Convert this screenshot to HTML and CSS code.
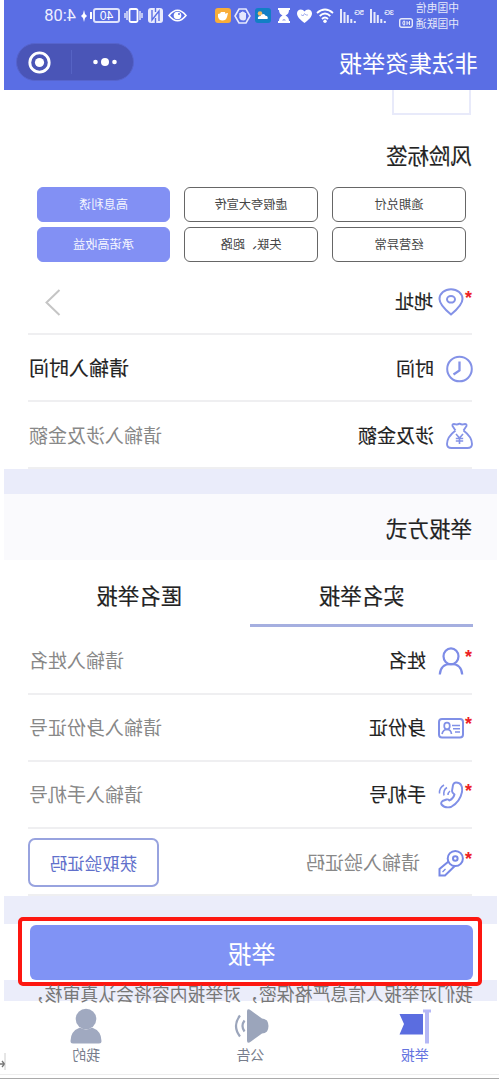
FILE: index.html
```html
<!DOCTYPE html>
<html lang="zh-CN">
<head>
<meta charset="utf-8">
<title>非法集资举报</title>
<link rel="stylesheet" href="styles.css">
</head>
<body>
<div class="mirror">
<div class="phone">
  <header class="header">
    <div class="status">
      <div class="carriers">
        <span>中国电信</span>
        <span class="carrier-line">中国联通<svg width="14" height="10" viewBox="0 0 14 10"><rect x=".7" y=".7" width="12.6" height="8.6" rx="2" fill="none" stroke="#fff" stroke-width="1.4"/><path d="M3.5 3v4M6 3v4M3.5 5H6M8.3 3v4h1.2q1.5-2 0-4z" fill="none" stroke="#fff"/></svg></span>
      </div>
      <div class="signal"><small>3G</small><svg width="17" height="15" viewBox="0 0 17 15"><path d="M1.2 13v2M4.7 11v4M8.2 7v8M11.5 4v11M15 1v14" stroke="#fff" stroke-width="2" opacity=".85"/></svg></div>
      <div class="signal second"><small>5G</small><svg width="17" height="15" viewBox="0 0 17 15"><path d="M1.2 13v2M4.7 11v4M8.2 7v8M11.5 4v11M15 1v14" stroke="#fff" stroke-width="2" opacity=".85"/></svg></div>
      <svg class="s-wifi" width="18" height="15" viewBox="0 0 18 15"><g fill="none" stroke="#fff" stroke-width="1.8"><path d="M1 5Q9-2 17 5M3.7 8Q9 3 14.3 8M6 11Q9 8 12 11"/></g><circle cx="9" cy="13.2" r="1.7" fill="#fff"/></svg>
      <svg class="s-heart" width="15" height="14" viewBox="0 0 15 14"><path d="M7.500 14C3 10.500 0 8 0 4.300 0 0 5.500-1 7.500 2.500 9.500-1 15 0 15 4.300 15 8 12 10.500 7.500 14z" fill="#fff"/><path d="M4 6h2l1.500-1.500 1.500 2.500 1-1h1" fill="none" stroke="#a5afee"/></svg>
      <svg class="s-glass" width="12" height="15" viewBox="0 0 12 15"><path d="M0 0h12v2h-1q0 4-3.500 5.500Q11 9 11 13h1v2H0v-2h1q0-4 3.500-5.500Q1 6 1 2H0z" fill="#fff"/><path d="M4 12.500Q6 9.500 8 12.500z" fill="#8f9bec"/></svg>
      <svg class="s-weather" width="16" height="15" viewBox="0 0 16 15"><rect width="16" height="15" rx="3" fill="#127fc5"/><circle cx="11" cy="5.500" r="2.300" fill="#f4ba60"/><path d="M3.500 11q-1-3 2-3.200 1-2.800 4-1.300 1 1 .8 1.500 3.500 0 2.700 3z" fill="#fff"/></svg>
      <svg class="s-hex" width="17" height="16" viewBox="0 0 17 16"><path d="M5 1h7l4 7-4 7H5L1 8z" fill="none" stroke="#e5e8fd" stroke-width="1.600"/><path d="M5 8V5h1.300V4h1.300V3.500H9V4h1.300v1h1.400v5q-1 2.500-4 2.500T5 9z" fill="#e5e8fd"/></svg>
      <svg class="s-orange" width="16" height="15" viewBox="0 0 16 15"><rect width="16" height="15" rx="3" fill="#f8ad39"/><path d="M3 5q2 0 2.500 1l.5-2h4l1 1.500 2 .5v3q-1 3.500-4.500 3.500T4 9z" fill="#fff"/></svg>
      <svg class="s-eye" width="19" height="13" viewBox="0 0 19 13"><path d="M1 6.500Q9.500-4 18 6.500 9.500 17 1 6.500z" fill="none" stroke="#fff" stroke-width="1.600"/><circle cx="9.500" cy="6.500" r="3.800" fill="#fff"/><circle cx="8" cy="5" r="1" fill="#5a6ee4"/></svg>
      <svg class="s-nfc" width="15" height="15" viewBox="0 0 15 15"><rect width="15" height="15" rx="3" fill="#e9ebfd"/><path d="M4 13V3l7 9V2M7.500 0v4M7.500 10v5" fill="none" stroke="#5a6ee4" stroke-width="1.400"/></svg>
      <svg class="s-vib" width="19" height="15" viewBox="0 0 19 15"><rect x="5.500" y="1" width="8" height="13" rx="1.500" fill="none" stroke="#fff" stroke-width="1.800"/><path d="M3 3v9M1 5v5M16 3v9M18 5v5" stroke="#fff" stroke-width="1.200"/></svg>
      <div class="battery">40</div>
      <svg class="s-charge" width="6" height="12" viewBox="0 0 6 12"><path d="M3 0l1 4 2 2-2 2-1 4-1-4-2-2 2-2z" fill="#fff"/></svg>
      <time>4:08</time>
    </div>
    <div class="titlebar">
      <h1>非法集资举报</h1>
      <div class="capsule">
        <svg width="24" height="8" viewBox="0 0 24 8"><g fill="#fff"><circle cx="2.500" cy="4" r="2.300"/><circle cx="12" cy="4" r="4"/><circle cx="21.500" cy="4" r="2.300"/></g></svg>
        <i></i>
        <svg width="23" height="23" viewBox="0 0 23 23"><circle cx="11.500" cy="11.500" r="9.700" fill="none" stroke="#fff" stroke-width="2.800"/><circle cx="11.500" cy="11.500" r="4.600" fill="#fff"/></svg>
      </div>
    </div>
  </header>

  <section class="risk">
    <div class="upload"></div>
    <h2>风险标签</h2>
    <div class="tags">
      <span class="tag">逾期兑付</span><span class="tag">虚假夸大宣传</span><span class="tag on">高息利诱</span>
      <span class="tag">经营异常</span><span class="tag">失联、跑路</span><span class="tag on">承诺高收益</span>
    </div>
  </section>

  <section class="rows">
    <div class="row req">
      <b class="star">*</b>
      <svg class="icon" width="26" height="28" viewBox="0 0 26 28"><g fill="none" stroke="#8492e7" stroke-width="2"><path d="M13 26.500Q1.500 17 1.500 11a11.500 9.800 0 0 1 23 0Q24.500 17 13 26.500z"/><ellipse cx="13" cy="11.300" rx="4" ry="3.300"/></g></svg>
      <label class="near">地址</label>
      <svg class="chevron" width="16" height="27" viewBox="0 0 16 27"><path d="M1.500 1l13 12.500-13 12.500" fill="none" stroke="#c5c5c5" stroke-width="2"/></svg>
    </div>
    <div class="row">
      <svg class="icon" width="27" height="28" viewBox="0 0 27 28"><g fill="none" stroke="#8492e7" stroke-width="2"><circle cx="13.500" cy="14" r="12.300"/><path d="M13.500 6.500v9l6 4" stroke-width="2.300"/></g></svg>
      <label>时间</label><span class="value dark">请输入时间</span>
    </div>
    <div class="row">
      <svg class="icon" width="27" height="28" viewBox="0 0 27 28"><g fill="none" stroke="#8492e7" stroke-width="1.900"><path d="M9.500 8.500L6.500 4Q6 1.500 9 2.200q2 .8 4.500-.5 2.500 1.300 4.500.5 3-.7 2.500 1.800l-3 4.500M9.500 8.500Q1 15 1 22q0 4 4.500 4h16q4.500 0 4.500-4 0-7-8.500-13.500"/><path d="M10 12l3.500 4 3.500-4M13.500 16v6M9.800 16.500h7.400M9.800 19h7.400" stroke-width="1.600"/></g></svg>
      <label>涉及金额</label><span class="value">请输入涉及金额</span>
    </div>
  </section>

  <div class="band"></div>
  <div class="method"><h2>举报方式</h2></div>
  <nav class="tabs"><span class="active">实名举报</span><span>匿名举报</span></nav>

  <section class="rows identity">
    <div class="row req">
      <b class="star">*</b>
      <svg class="icon" width="26" height="28" viewBox="0 0 26 28"><g fill="none" stroke="#7d8ce7" stroke-width="2.200"><ellipse cx="13" cy="9.300" rx="7.500" ry="8"/><path d="M1.800 27.500Q2.500 17 13 17t11.200 10.500"/></g></svg>
      <label>姓名</label><span class="value">请输入姓名</span>
    </div>
    <div class="row req">
      <b class="star">*</b>
      <svg class="icon" width="26" height="28" viewBox="0 0 26 28"><g fill="none" stroke="#8090e7" stroke-width="2"><rect x="1" y="5" width="24" height="18.500" rx="3"/><path d="M4 11.500h8M4 14.800h7M4 18h5" stroke-width="1.500"/><ellipse cx="17" cy="12" rx="2.800" ry="3.300" stroke-width="1.700"/><path d="M12.500 20q.5-4.500 4.500-4.500t5 4.500" stroke-width="1.700"/></g></svg>
      <label>身份证</label><span class="value">请输入身份证号</span>
    </div>
    <div class="row req">
      <b class="star">*</b>
      <svg class="icon" width="26" height="28" viewBox="0 0 26 28"><g fill="none" stroke="#8090e7" stroke-width="1.900" stroke-linejoin="round"><path d="M8 1.500Q1 1.500 2 11q2 10 11 15 6 1.500 9.500-2.500 1-2-1-3.500l-4-1.500q-1.500-.5-3 1-4-2-5-6 2.500-2 2.500-3.500L11 4Q10 1.500 8 1.500z"/><path d="M14 10q2 1.500 2 4M17 6.500q4 2.500 3 8M20 4q5 3 4.500 8.500" stroke-width="1.500"/></g></svg>
      <label>手机号</label><span class="value">请输入手机号</span>
    </div>
    <div class="row req code">
      <b class="star">*</b>
      <svg class="icon" width="26" height="28" viewBox="0 0 26 28"><g fill="none" stroke="#7788e6" stroke-width="2"><circle cx="8.700" cy="9.500" r="7.600"/><circle cx="8.700" cy="9.500" r="2.300"/><path d="M9.500 17.300L19 26.500h5.500V20l-9.300-7.800"/><path d="M18.500 20l3 3" stroke-width="1.300"/></g></svg>
      <span class="prompt">请输入验证码</span><button class="get">获取验证码</button>
    </div>
  </section>

  <section class="submit">
    <div class="frame"><button class="send">举报</button></div>
    <p>我们对举报人信息严格保密，对举报内容将会认真审核，</p>
  </section>

  <footer class="tabbar">
    <div class="item sel">
      <svg width="32" height="35" viewBox="0 0 32 35"><path d="M8 5.500h23.500L27 15.500l4.500 10.500H8z" fill="#5b6de0"/><path d="M0 1h8v3H6v31H2V4H0z" fill="#b5b8f5"/></svg><span>举报</span>
    </div>
    <div class="item">
      <svg width="37" height="35" viewBox="0 0 37 35"><path d="M2 12q3-2 5-2L18 2q4-3 4 1v29q0 4-4 1L7 25q-3 0-5-2Q-1 17.500 2 12z" fill="#9ba5bb"/><path d="M24.500 12q4 5.500 0 11M29 7q8 10.500 0 21" fill="none" stroke="#9ba5bb" stroke-width="2.200"/></svg><span>公告</span>
    </div>
    <div class="item">
      <svg width="32" height="36" viewBox="0 0 32 36"><circle cx="16" cy="11" r="10.300" fill="#a0a9c0"/><path d="M.5 33Q.5 23 10 19.500q6 4 12 0Q31.500 23 31.500 33q0 2.500-2.500 2.500H3Q.5 35.500.5 33z" fill="#a0a9c0"/></svg><span>我的</span>
    </div>
  </footer>
  <div class="base"></div>
</div>
<svg class="edge-mark" width="6" height="18" viewBox="0 0 6 18"><path d="M1 0v17" stroke="#ccc"/><path d="M1.500 11l2.500-3M1.500 11l2.500 3M2 11h4" stroke="#777" stroke-width="1.300" fill="none"/></svg>
</div>
</body>
</html>
```
FILE: styles.css
```css
* { box-sizing: border-box; }
body { margin: 0; background: #fff; font-family: "Noto Sans CJK SC", sans-serif; color: #222; }
h1, h2, p { margin: 0; font-weight: 400; }
svg { display: block; flex: none; }
button { font-family: inherit; padding: 0; }

/* The whole screen is shown flipped left to right */
.mirror { position: relative; width: 499px; height: 1080px; padding: 0 4px 0 2px; overflow: hidden; transform: scaleX(-1); }
.phone { width: 493px; }

.header { height: 90px; background: #5a6ee4; color: #fff; }
.status { display: flex; align-items: center; height: 31px; padding-left: 38px; }
.carriers { width: 65px; font-size: 10.800px; line-height: 15.500px; opacity: .85; white-space: nowrap; display: flex; flex-direction: column; }
.carrier-line { display: flex; align-items: center; gap: 3px; }
.signal { display: flex; width: 25px; }
.signal small { width: 8px; font: 700 8px/9px "Liberation Sans", sans-serif; letter-spacing: -.8px; opacity: .8; }
.second { margin-left: 5px; }
.s-wifi { margin-left: 5px; }
.s-heart { margin-left: 4px; }
.s-glass { margin-left: 7px; }
.s-weather { margin-left: 7px; }
.s-hex { margin-left: 4px; }
.s-orange { margin-left: 3px; }
.s-eye { margin-left: 28px; }
.s-nfc { margin-left: 5px; }
.s-vib { margin-left: 5px; }
.battery { position: relative; width: 27px; height: 15px; margin-left: 4px; border: 2px solid #dfe3fc; border-radius: 3px; font: 12px/12px "Liberation Sans", sans-serif; text-align: center; }
.battery::after { content: ""; position: absolute; left: 26px; top: 2px; width: 2px; height: 7px; background: #fff; }
.s-charge { margin-left: 6px; }
.status time { margin-left: 5px; font: 16.500px/20px Roboto, sans-serif; color: #eef; }
.titlebar { display: flex; align-items: center; justify-content: space-between; height: 59px; padding: 3px 12px 1px 19px; }
.titlebar h1 { font-size: 23.200px; line-height: 30px; }
.capsule { display: flex; align-items: center; justify-content: space-between; width: 118px; height: 38px; padding: 1px 11px 0 16px; border: 1px solid #5664cd; border-radius: 19px; background: #4a55b7; }
.capsule i { width: 1px; height: 24px; background: #5663c4; }

.risk { height: 179px; padding: 0 24px 0 25px; }
.upload { width: 79px; height: 25px; margin-left: 1px; border: 2px solid #e8eafa; border-top: 0; }
h2 { font-size: 21.500px; line-height: 30px; -webkit-text-stroke: .2px; }
.risk h2 { margin-top: 25px; }
.tags { display: grid; grid-template-columns: 134px 134px 133px; grid-auto-rows: 35px; column-gap: 14px; row-gap: 5px; margin: 17px 0 0 6px; }
.tag { border: 1.500px solid #666; border-radius: 6px; font-size: 12.200px; line-height: 33px; text-align: center; color: #444; }
.tag.on { background: #8290f4; border-color: #8290f4; color: #f5f6ff; line-height: 32px; }

.rows { padding: 0 24px 0 25px; }
.row { display: flex; align-items: center; height: 67.200px; border-bottom: 2px solid #efeff1; font-size: 19px; line-height: 28px; }
.rows:not(.identity) .row:first-child { height: 66px; }
.star { width: 8px; height: 28px; font: 700 18px/23px "Liberation Sans", sans-serif; color: #ed2024; }
.icon { margin-top: 2px; }
.row label { margin-left: 12px; color: #222; -webkit-text-stroke: .15px; }
.row label.near { margin-left: 5px; }
.row:not(.req) .icon { margin-left: -1px; }
.row:not(.req) label { margin-left: 12px; }
.value { margin-left: auto; margin-right: -1px; position: relative; left: -2px; color: #888; }
.value.dark { color: #222; -webkit-text-stroke: .15px; font-size: 20px; }
.chevron { margin-left: auto; margin-right: 17px; margin-top: 2px; }
.prompt { margin-left: 18px; color: #888; }
.get { width: 131px; height: 49px; margin: 1px 0 0 auto; border: 2px solid #98a3df; border-radius: 7px; background: #fff; color: #6170cb; font-size: 17.500px; }

.band { height: 25px; background: #eaecfa; }
.method { height: 66px; padding: 19px 25px 0; background: #fafafd; }
.tabs { display: grid; grid-template-columns: 1fr 1fr; height: 67px; padding: 0 24px 0 24px; }
.tabs span { padding-top: 20px; font-size: 21.500px; line-height: 30px; text-align: center; -webkit-text-stroke: .2px; }
.tabs .active { border-bottom: 3px solid #a5afe0; }

.submit { height: 105px; padding: 21px 14px 0 15px; background: linear-gradient(#ebedfa 28px, #fff 28px, #fff 84px, #ebedfa 84px); }
.frame { height: 69px; padding: 4px 4px 2px 5px; border: 4px solid #fd1710; border-radius: 5px; background: #fff; }
.send { display: block; width: 443px; height: 55px; border: 0; border-radius: 6px; background: #8093f5; color: #fff; font-size: 24px; line-height: 55px; }
.submit p { height: 15px; margin-left: 9px; font-size: 17.850px; line-height: 15px; color: #777; white-space: nowrap; }

.tabbar { display: grid; grid-template-columns: repeat(3, 1fr); height: 73px; padding-top: 7px; background: #fff; }
.item { display: flex; flex-direction: column; align-items: center; font-size: 14px; line-height: 20px; color: #777d8c; }
.item svg { height: 36px; }
.item span { margin-top: 0; }
.item.sel { color: #6473df; }
.base { height: 5px; border-top: 1px solid #eee; border-bottom: 1px solid #aaa; margin: 0 -4px 0 -2px; }
.edge-mark { position: absolute; right: 0; top: 1053px; }
```
